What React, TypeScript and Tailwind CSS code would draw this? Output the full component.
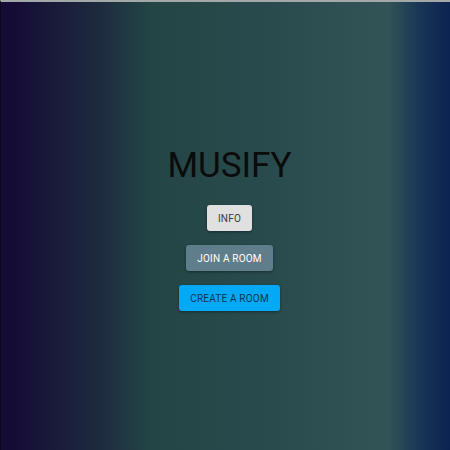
export default function App() {
  return (
    <div
      className="flex h-[450px] w-[450px] flex-col items-center border-t-2 border-l border-t-[#a3a9a9] border-l-[#0a0818] bg-[linear-gradient(to_right,#150c35_3%,#1e2a3e_22%,#234545_33%,#2a4b4d_60%,#335456_86%,#1a3656_93%,#0b2350_100%)] pl-[8px] pt-[142px]"
      style={{ fontFamily: 'Roboto, "Liberation Sans", Arial, sans-serif' }}
    >
      <h1 className="text-[35px] leading-[44px] text-[#0b0b0b]">MUSIFY</h1>
      <div className="mt-[17px] flex flex-col items-center gap-[14px]">
        <button className="h-[26px] rounded-[3px] bg-[#e0e0e0] px-[11px] text-[10px] tracking-[0.02em] text-[#3a3a3a] shadow-[0_1px_3px_rgba(0,0,0,0.4)]">
          INFO
        </button>
        <button className="h-[26px] rounded-[3px] bg-[#607d8b] px-[11px] text-[10px] tracking-[0.02em] text-white shadow-[0_1px_3px_rgba(0,0,0,0.4)]">
          JOIN A ROOM
        </button>
        <button className="h-[26px] rounded-[3px] bg-[#03a9f4] px-[11px] text-[10px] tracking-[0.02em] text-[#0d3550] shadow-[0_1px_3px_rgba(0,0,0,0.4)]">
          CREATE A ROOM
        </button>
      </div>
    </div>
  );
}
